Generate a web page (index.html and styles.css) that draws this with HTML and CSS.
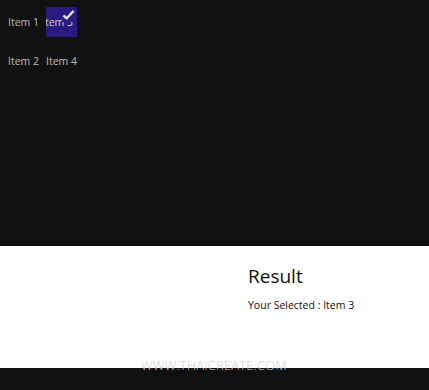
FILE: index.html
```html
<!DOCTYPE html>
<html lang="en">
<head>
    <meta charset="UTF-8">
    <title>ListView Result</title>
    <link rel="stylesheet" href="styles.css">
</head>
<body>
    <section class="items">
        <div class="item">Item 1</div>
        <div class="item selected">
            <span class="clip">Item 3</span>
            <span class="corner">
                <svg width="14" height="12" viewBox="0 0 14 12"><path d="M1.5 6.5 L5 9.5 L12.5 1.5" fill="none" stroke="#ddd" stroke-width="2.6"/></svg>
            </span>
        </div>
        <div class="item">Item 2</div>
        <div class="item">Item 4</div>
    </section>
    <section class="result">
        <h1>Result</h1>
        <p>Your Selected : Item 3</p>
    </section>
    <footer class="bottom"></footer>
    <div class="mark">WWW.THAICREATE.COM</div>
</body>
</html>
```
FILE: styles.css
```css
*{padding: 0;margin: 0;}
body{background: #111;font-family: "Open Sans", "Noto Sans", sans-serif;position: relative;height: 390px;overflow: hidden;}
.items{height: 246px;display: grid;grid-template-columns: 38px 31px;grid-auto-rows: 30px;row-gap: 9px;padding: 7px 0 0 8px;box-sizing: border-box;}
.item{color: #bbb;font-size: 10.5px;line-height: 30px;white-space: nowrap;}
.selected{position: relative;background: #2b1982;overflow: hidden;}
.selected .clip{position: absolute;left: -4px;top: 0;color: #ccc;}
.corner{position: absolute;right: 0;top: 0;width: 15px;height: 15px;background: #2b1982;display: flex;align-items: flex-start;justify-content: flex-end;padding: 2px 2px 0 0;box-sizing: border-box;}
.result{background: #fff;height: 122px;padding: 17px 0 0 248px;box-sizing: border-box;}
.result h1{font-weight: 400;font-size: 19px;color: #111;line-height: 26px;}
.result p{font-size: 10.5px;color: #111;margin-top: 9px;}
.bottom{height: 22px;background: #111;}
.mark{position: absolute;left: 141px;top: 356px;font-size: 13px;color: #ccc;letter-spacing: 0.2px;font-weight: 300;}
```
